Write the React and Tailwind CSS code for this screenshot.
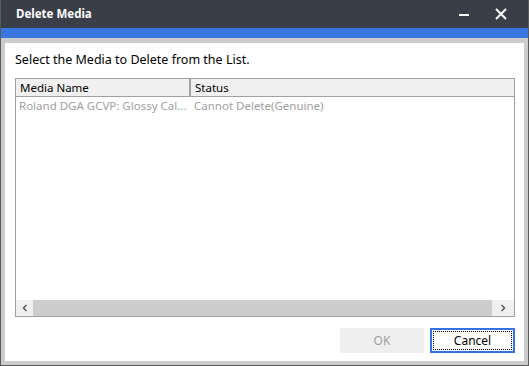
import React from 'react';

const font = { fontFamily: '"Noto Sans", "Open Sans", sans-serif' };

function TitleBar() {
  return (
    <div className="h-[28px] bg-[#393e48] flex items-center pl-[15px] pr-[20px]">
      <span className="text-white font-bold text-[11.5px] leading-none">Delete Media</span>
      <div className="ml-auto flex items-center gap-[24px]">
        <svg width="12" height="12" viewBox="0 0 12 12">
          <rect x="1" y="6" width="10" height="2" fill="#ffffff" />
        </svg>
        <svg width="14" height="14" viewBox="0 0 14 14">
          <path d="M2 2L12 12M12 2L2 12" stroke="#ffffff" strokeWidth="2" />
        </svg>
      </div>
    </div>
  );
}

function ScrollBar() {
  return (
    <div className="h-[16px] flex bg-[#f0f0f0]">
      <div className="w-[17px] flex items-center justify-center">
        <svg width="8" height="8" viewBox="0 0 8 8">
          <path d="M5.5 1L2.5 4L5.5 7" stroke="#606060" strokeWidth="1.6" fill="none" />
        </svg>
      </div>
      <div className="flex-1 bg-[#cdcdcd]" />
      <div className="w-[22px] flex items-center justify-center">
        <svg width="8" height="8" viewBox="0 0 8 8">
          <path d="M2.5 1L5.5 4L2.5 7" stroke="#606060" strokeWidth="1.6" fill="none" />
        </svg>
      </div>
    </div>
  );
}

function MediaTable() {
  return (
    <div className="mt-[11px] h-[239px] border border-[#a0a0a0] flex flex-col">
      {/* header */}
      <div className="h-[18px] bg-[#f0f0f0] border-b border-[#a0a0a0] flex text-[11.5px] text-black leading-none">
        <div className="w-[175px] flex items-center pl-[4px] border-r-2 border-[#a0a0a0]">Media Name</div>
        <div className="flex-1 flex items-center pl-[4px]">Status</div>
      </div>
      {/* rows */}
      <div className="flex-1 flex flex-col text-[11.5px] text-[#a0a0a0] leading-[14px]">
        <div className="h-[18px] flex items-center">
          <span className="w-[178px] shrink-0 pl-[3px] whitespace-nowrap">Roland DGA GCVP: Glossy Cal...</span>
          <span className="whitespace-nowrap">Cannot Delete(Genuine)</span>
        </div>
      </div>
      <ScrollBar />
    </div>
  );
}

export default function App() {
  return (
    <div className="w-[529px] h-[366px] bg-[#5a5a5a] p-[1px] pt-0" style={font}>
      <div className="h-full flex flex-col bg-[#cccccc]">
        <TitleBar />
        <div className="h-[10px] bg-[#3876e0]" />
        <div className="flex-1 flex flex-col pt-[5px] pb-[4px] px-[4px]">
          <div className="flex-1 bg-white flex flex-col pl-[10px] pr-[9px] pt-[10px]">
            <div className="text-[12.5px] leading-[14px] text-black">Select the Media to Delete from the List.</div>
            <MediaTable />
            <div className="mt-[11px] flex justify-end gap-[6px]">
              <button type="button" className="w-[84px] h-[25px] bg-[#efefef] text-[#a0a0a0] text-[12px]">OK</button>
              <button type="button" className="w-[85px] h-[25px] border-2 border-[#3574e0] p-[1px] text-[12px] text-black">
                <span className="w-full h-full flex items-center justify-center border border-dotted border-black">Cancel</span>
              </button>
            </div>
          </div>
        </div>
      </div>
    </div>
  );
}
